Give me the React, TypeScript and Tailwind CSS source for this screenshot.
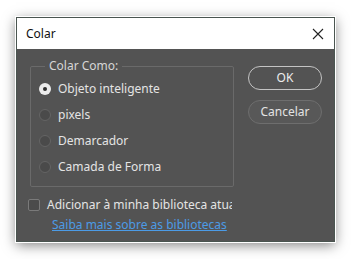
import { useState } from "react";

const options = ["Objeto inteligente", "pixels", "Demarcador", "Camada de Forma"];

export default function App() {
  const [choice, setChoice] = useState(0);
  const [addToLib, setAddToLib] = useState(false);

  return (
    <div className="h-[259px] w-[351px] overflow-hidden bg-white pl-[16px] pt-[17px] font-['Noto_Sans',sans-serif]">
      <div className="flex h-[225px] w-[319px] flex-col border border-[#4a5550] shadow-[0_0_0_1px_#ffffff,0_3px_12px_rgba(0,0,0,0.5)]">
        {/* title bar */}
        <div className="flex h-[31px] items-center justify-between bg-white pl-[9px] pr-[10px]">
          <span className="text-[12px] text-[#111]">Colar</span>
          <svg width="12" height="12" viewBox="0 0 12 12" className="text-[#222]">
            <path d="M1 1L11 11M11 1L1 11" stroke="currentColor" strokeWidth="1.1" fill="none" />
          </svg>
        </div>

        {/* body */}
        <div className="flex-1 bg-[#535353] pt-[10px] text-[12px] text-[#e4e4e4]">
          <div className="flex items-start">
            <fieldset className="ml-[13px] h-[128px] w-[204px] rounded-[2px] border border-[#6a6a6a] pb-[6px] pl-[8px] pt-[3px]">
              <legend className="ml-[6px] px-[4px] leading-[14px] text-[#d6d6d6]">Colar Como:</legend>
              {options.map((o, i) => (
                <button
                  key={o}
                  onClick={() => setChoice(i)}
                  className="flex h-[26px] items-center gap-[7px]"
                >
                  {choice === i ? (
                    <span className="flex h-[12px] w-[12px] items-center justify-center rounded-full bg-[#ececec]">
                      <span className="h-[4px] w-[4px] rounded-full bg-[#2e2e2e]" />
                    </span>
                  ) : (
                    <span className="h-[12px] w-[12px] rounded-full border border-[#646464] bg-[#4a4a4a]" />
                  )}
                  <span>{o}</span>
                </button>
              ))}
            </fieldset>

            <div className="ml-[14px] mt-[7px] flex flex-col gap-[10px]">
              <button className="h-[24px] w-[74px] rounded-full border-[1.5px] border-[#c4c4c4] text-[12px] text-[#ececec]">
                OK
              </button>
              <button className="h-[24px] w-[74px] rounded-full border border-[#6e6e6e] bg-[#585858] text-[12px] text-[#e4e4e4]">
                Cancelar
              </button>
            </div>
          </div>

          <div className="ml-[11px] mt-[11px] flex h-[14px] w-[204px] items-center gap-[7px] overflow-hidden whitespace-nowrap">
            <button
              onClick={() => setAddToLib(!addToLib)}
              className="h-[12px] w-[12px] shrink-0 rounded-[2px] border border-[#7a7a7a] bg-[#4b4b4b]"
            />
            <span>Adicionar à minha biblioteca atual</span>
          </div>

          <div className="ml-[35px] mt-[6px] leading-[14px]">
            <a href="#" className="text-[#4c9be6] underline">
              Saiba mais sobre as bibliotecas
            </a>
          </div>
        </div>
      </div>
    </div>
  );
}
